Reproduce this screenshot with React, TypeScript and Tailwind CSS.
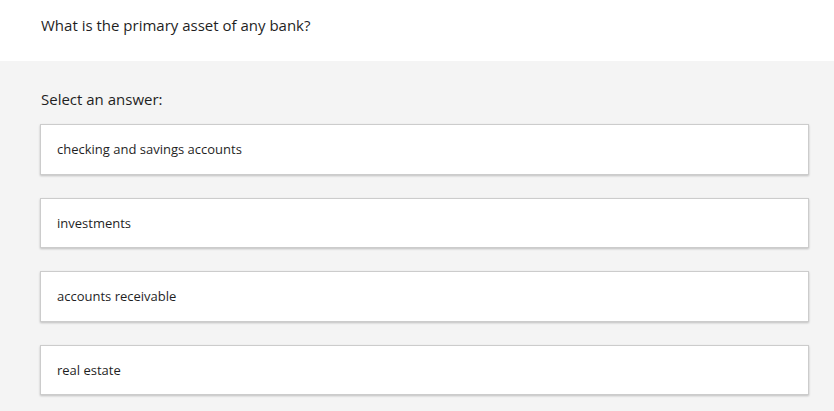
const ANSWERS = [
  'checking and savings accounts',
  'investments',
  'accounts receivable',
  'real estate',
]

export default function App() {
  return (
    <div className="min-h-[411px] bg-[#f4f4f4] font-['Open_Sans',sans-serif] text-[#1f1f1f]">
      <div className="h-[61px] bg-white pl-[41px] pt-[14px]">
        <h1 className="text-[15px] leading-[22px]">What is the primary asset of any bank?</h1>
      </div>

      <div className="pl-[40px] pr-[25px] pt-[27px]">
        <p className="pl-[1px] text-[15px] leading-[22px]">Select an answer:</p>
        <div className="mt-[14px] flex flex-col gap-[23px]">
          {ANSWERS.map((answer) => (
            <button
              key={answer}
              type="button"
              className="flex h-[50.5px] items-center border border-[#cccccc] bg-white pl-[16px] pt-[1px] text-left text-[13px] shadow-[0_1px_2px_rgba(0,0,0,0.22)]"
            >
              {answer}
            </button>
          ))}
        </div>
      </div>
    </div>
  )
}
